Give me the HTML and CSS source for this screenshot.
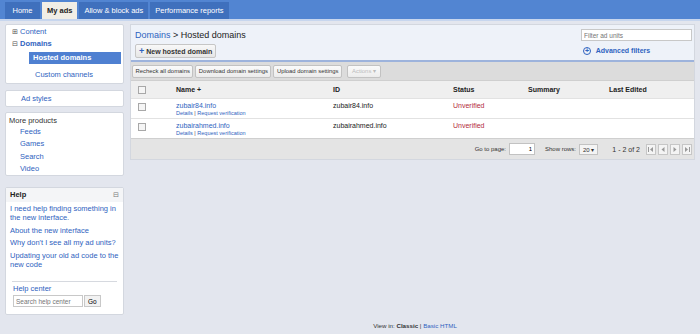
FILE: index.html
```html
<!DOCTYPE html>
<html lang="en">
<head>
    <meta charset="UTF-8">
    <title>My ads - Hosted domains</title>
    <link rel="stylesheet" href="styles.css">
</head>
<body>
    <div class="topbar">
        <a class="tab home">Home</a>
        <a class="tab active">My ads</a>
        <a class="tab">Allow &amp; block ads</a>
        <a class="tab">Performance reports</a>
    </div>

    <div class="layout">
        <div class="sidebar">
            <div class="box nav">
                <div class="tree"><span class="pm">&#8862;</span> Content</div>
                <div class="tree open"><span class="pm">&#8863;</span> Domains</div>
                <div class="sub selected">Hosted domains</div>
                <div class="sub">Custom channels</div>
            </div>

            <div class="box adstyles">Ad styles</div>

            <div class="box products">
                <div class="products-title">More products</div>
                <a>Feeds</a>
                <a>Games</a>
                <a>Search</a>
                <a>Video</a>
            </div>

            <div class="box help">
                <div class="help-head">Help <span class="collapse">&#8863;</span></div>
                <div class="help-links">
                    <a>I need help finding something in the new interface.</a>
                    <a>About the new interface</a>
                    <a>Why don't I see all my ad units?</a>
                    <a>Updating your old ad code to the new code</a>
                </div>
                <div class="help-center">
                    <a>Help center</a>
                    <div class="help-search">
                        <input type="text" placeholder="Search help center">
                        <button>Go</button>
                    </div>
                </div>
            </div>
        </div>

        <div class="main">
            <div class="main-head">
                <div class="head-left">
                    <div class="crumb"><a>Domains</a> &gt; Hosted domains</div>
                    <button class="new-btn"><span class="plus">+</span> New hosted domain</button>
                </div>
                <div class="head-right">
                    <input class="filter" type="text" placeholder="Filter ad units">
                    <a class="adv"><span class="adv-icon">+</span> Advanced filters</a>
                </div>
            </div>

            <div class="toolbar">
                <button>Recheck all domains</button>
                <button>Download domain settings</button>
                <button>Upload domain settings</button>
                <button class="disabled">Actions &#9662;</button>
            </div>

            <table class="grid">
                <colgroup>
                    <col style="width:35px">
                    <col style="width:157px">
                    <col style="width:120px">
                    <col style="width:75px">
                    <col style="width:81px">
                    <col>
                </colgroup>
                <thead>
                    <tr>
                        <th class="chk"><span class="box-check"></span></th>
                        <th>Name +</th>
                        <th>ID</th>
                        <th>Status</th>
                        <th>Summary</th>
                        <th>Last Edited</th>
                    </tr>
                </thead>
                <tbody>
                    <tr>
                        <td class="chk"><span class="box-check"></span></td>
                        <td><a class="name">zubair84.info</a><div class="meta"><a>Details</a> | <a>Request verification</a></div></td>
                        <td>zubair84.info</td>
                        <td class="unverified">Unverified</td>
                        <td></td>
                        <td></td>
                    </tr>
                    <tr>
                        <td class="chk"><span class="box-check"></span></td>
                        <td><a class="name">zubairahmed.info</a><div class="meta"><a>Details</a> | <a>Request verification</a></div></td>
                        <td>zubairahmed.info</td>
                        <td class="unverified">Unverified</td>
                        <td></td>
                        <td></td>
                    </tr>
                </tbody>
            </table>

            <div class="pager">
                <span>Go to page:</span>
                <input class="page-input" type="text" value="1">
                <span class="rows-label">Show rows:</span>
                <span class="rows-select">20 &#9662;</span>
                <span class="count">1 - 2 of 2</span>
                <span class="navs">
                    <span class="nav-btn"><svg width="6" height="5" viewBox="0 0 6 5"><rect x="0" y="0" width="1" height="5" fill="#999"/><path d="M5 0 L2 2.5 L5 5 Z" fill="#999"/></svg></span>
                    <span class="nav-btn"><svg width="6" height="5" viewBox="0 0 6 5"><path d="M4.5 0 L1.5 2.5 L4.5 5 Z" fill="#999"/></svg></span>
                    <span class="nav-btn"><svg width="6" height="5" viewBox="0 0 6 5"><path d="M1.5 0 L4.5 2.5 L1.5 5 Z" fill="#999"/></svg></span>
                    <span class="nav-btn"><svg width="6" height="5" viewBox="0 0 6 5"><path d="M1 0 L4 2.5 L1 5 Z" fill="#999"/><rect x="5" y="0" width="1" height="5" fill="#999"/></svg></span>
                </span>
            </div>
        </div>
    </div>

    <div class="footer">View in: <b>Classic</b> | <a>Basic HTML</a></div>
</body>
</html>
```

FILE: styles.css
```css
body {
    margin: 0;
    background: #e3e6ee;
    font-family: "Liberation Sans", Arial, sans-serif;
    font-size: 7.5px;
    color: #222;
    height: 334px;
    position: relative;
}

a {
    color: #2f63c0;
    text-decoration: none;
}

/* top tabs */
.topbar {
    height: 19px;
    background: #5285d2;
    border-bottom: 2px solid #c7d6ee;
    display: flex;
    align-items: flex-end;
    gap: 2px;
    padding-left: 5px;
}

.tab {
    height: 17px;
    line-height: 17px;
    padding: 0 5px;
    background: #3f70bd;
    color: #fff;
    font-size: 7.5px;
}

.tab.home {
    padding: 0 7.5px;
}

.tab.active {
    background: #f1eee6;
    color: #222;
    font-weight: bold;
}

/* layout */
.layout {
    display: flex;
    gap: 6px;
    padding: 3px 5px 0 5px;
}

.sidebar {
    width: 119px;
    display: flex;
    flex-direction: column;
}

.box {
    background: #fff;
    border: 1px solid #d3d7df;
    border-radius: 2px;
}

.nav {
    padding: 1px 2px 2px 2px;
}

.tree {
    height: 12px;
    line-height: 12px;
    padding-left: 4px;
    color: #2f63c0;
}

.tree.open {
    font-weight: bold;
}

.pm {
    font-size: 6.5px;
    color: #555;
    font-weight: normal;
}

.sub {
    height: 12px;
    line-height: 12px;
    margin: 2px 0 0 21px;
    padding-left: 4px;
    color: #2f63c0;
}

.sub.selected {
    background: #4f80d1;
    color: #fff;
    font-weight: bold;
}

.sub + .sub {
    margin-top: 5px;
    padding-left: 6px;
}

.adstyles {
    margin-top: 6px;
    height: 15px;
    line-height: 15px;
    padding-left: 15px;
    color: #2f63c0;
}

.products {
    margin-top: 5px;
    height: 60px;
    padding: 2px 3px 0 3px;
}

.products-title {
    line-height: 11px;
    color: #333;
}

.products a {
    display: block;
    padding-left: 11px;
    line-height: 12.4px;
}

.help {
    margin-top: 11px;
    height: 126px;
    display: flex;
    flex-direction: column;
}

.help-head {
    background: #f4f5f7;
    padding: 2px 4px 2px 4px;
    font-weight: bold;
    display: flex;
    justify-content: space-between;
    line-height: 10px;
}

.collapse {
    font-weight: normal;
    color: #777;
    font-size: 6.5px;
}

.help-links {
    padding: 2px 4px 0 4px;
}

.help-links a {
    display: block;
    line-height: 9px;
    margin-bottom: 3.5px;
}

.help-center {
    margin: auto 6px 7px 6px;
    border-top: 1px solid #d6d9df;
    padding: 2px 1px 0 1px;
}

.help-center a {
    display: block;
    line-height: 10px;
}

.help-search {
    display: flex;
    gap: 1px;
    margin-top: 1px;
}

.help-search input {
    width: 64px;
    height: 10px;
    font-size: 6.5px;
    padding: 0 2px;
    border: 1px solid #c8c8c8;
    font-family: inherit;
}

.help-search button {
    height: 12px;
    font-size: 6.5px;
    padding: 0 3px;
    border: 1px solid #c8c8c8;
    background: #f2f2f2;
    font-family: inherit;
}

/* main panel */
.main {
    flex: 1;
    background: #fff;
    border: 1px solid #d3d7df;
    align-self: flex-start;
}

.main-head {
    background: #eef2f9;
    border-bottom: 2px solid #9db3dc;
    height: 35px;
    display: flex;
    justify-content: space-between;
    padding: 0 2px 0 4px;
}

.crumb {
    font-size: 9px;
    margin-top: 5px;
    line-height: 11px;
}

.new-btn {
    margin-top: 3px;
    height: 14px;
    font-size: 7px;
    font-weight: bold;
    padding: 0 3px;
    border: 1px solid #c6c6c6;
    border-radius: 2px;
    background: linear-gradient(#f8f8f8, #e6e6e6);
    font-family: inherit;
    color: #333;
}

.plus {
    color: #2f63c0;
    font-size: 9px;
}

.head-right {
    display: flex;
    flex-direction: column;
    align-items: flex-start;
    padding-top: 4px;
}

.filter {
    width: 105px;
    height: 10px;
    font-size: 6.5px;
    border: 1px solid #c8c8c8;
    padding: 0 2px;
    font-family: inherit;
}

.adv {
    margin: 6px 0 0 2px;
    font-weight: bold;
    font-size: 7px;
}

.adv-icon {
    display: inline-block;
    width: 6px;
    height: 6px;
    line-height: 6px;
    text-align: center;
    border: 1px solid #2f63c0;
    border-radius: 50%;
    font-size: 7px;
    margin-right: 3px;
}

.toolbar {
    background: #dcdcdc;
    height: 18px;
    display: flex;
    align-items: center;
    gap: 2px;
    padding-left: 1px;
}

.toolbar button {
    height: 13px;
    font-size: 5.9px;
    padding: 0 2.5px;
    border: 1px solid #c2c2c2;
    border-radius: 2px;
    background: linear-gradient(#fafafa, #ececec);
    font-family: inherit;
    color: #333;
}

.toolbar button.disabled {
    color: #bbb;
    margin-left: 3px;
    padding: 0 4px;
}

.grid {
    width: 100%;
    border-collapse: collapse;
    table-layout: fixed;
}

.grid th {
    background: #efefef;
    height: 17px;
    text-align: left;
    font-size: 7px;
    padding: 0 0 0 10px;
    border-top: 1px solid #cfcfcf;
}

.grid td {
    height: 16px;
    padding: 2px 0 0 10px;
    border-top: 1px solid #e2e2e2;
    vertical-align: top;
    font-size: 7px;
    line-height: 9px;
}

.grid .chk {
    padding-left: 7px;
}

.grid td.chk {
    padding-top: 3px;
}

.box-check {
    display: inline-block;
    width: 6px;
    height: 6px;
    border: 1px solid #a8a8a8;
    background: #f5f5f5;
    vertical-align: middle;
}

.meta {
    font-size: 5.5px;
    line-height: 7px;
    color: #555;
}

.unverified {
    color: #b32a3c;
}

.pager {
    background: #e4e4e4;
    border-top: 1px solid #cfcfcf;
    height: 20px;
    display: flex;
    align-items: center;
    justify-content: flex-end;
    padding-right: 2px;
    font-size: 6px;
    color: #333;
}

.page-input {
    width: 20px;
    height: 10px;
    border: 1px solid #c2c2c2;
    font-size: 6px;
    text-align: right;
    margin-left: 3px;
    padding: 0 2px;
    font-family: inherit;
}

.rows-label {
    margin-left: 10px;
}

.rows-select {
    margin-left: 3px;
    border: 1px solid #c2c2c2;
    background: #f4f4f4;
    padding: 1px 3px;
}

.count {
    margin-left: 14px;
    font-size: 7px;
}

.navs {
    display: flex;
    gap: 2px;
    margin-left: 6px;
}

.nav-btn {
    width: 8px;
    height: 9px;
    border: 1px solid #c6c6c6;
    background: #f4f4f4;
    display: flex;
    align-items: center;
    justify-content: center;
}

.footer {
    position: absolute;
    left: 130px;
    right: 0;
    top: 322px;
    text-align: center;
    font-size: 6.2px;
    color: #333;
}
```
